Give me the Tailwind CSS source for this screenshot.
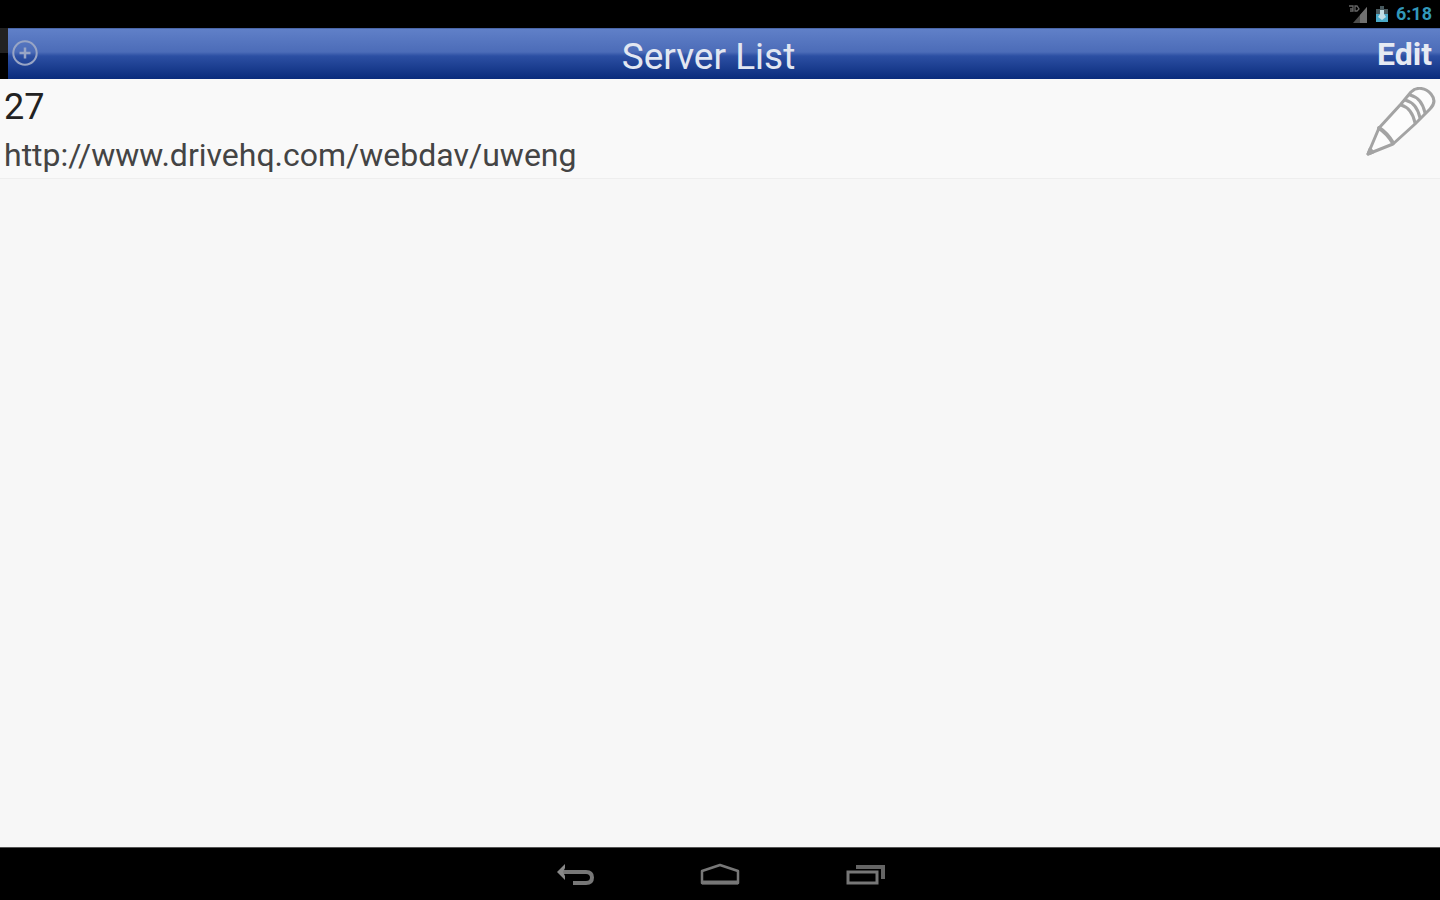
<!DOCTYPE html>
<html lang="en">
<head>
<meta charset="utf-8">
<meta name="viewport" content="width=device-width, initial-scale=1">
<title>Server List</title>
<script src="https://cdn.jsdelivr.net/npm/@tailwindcss/browser@4"></script>
</head>
<body class="flex min-h-screen flex-col bg-[#f7f7f7] font-[Roboto,sans-serif]">
  <div class="flex h-7 items-center justify-end gap-2 bg-black pr-2">
    <svg class="h-5 w-5" viewBox="0 0 20 20" aria-label="Mobile signal" role="img">
      <path d="M19 3v16H5z" fill="#4d4d4d"/>
      <path d="M19 3v16h-7v-8z" fill="#707070"/>
      <path d="M1 2h4v3H2M5 5v2H2M7 2v5h2l2-2-2-3z" fill="none" stroke="#666" stroke-width="1.3"/>
    </svg>
    <svg class="h-5 w-3" viewBox="0 0 12 20" aria-label="Battery" role="img">
      <path d="M4 2h4v3h4v13H0V5h4z" fill="#48595e"/>
      <path d="M0 10h12v8H0z" fill="#49a9c9"/>
      <path d="M4 6h4v4l2 3-4 3-4-3 2-3z" fill="#c2dce3"/>
    </svg>
    <time class="text-lg leading-7 font-bold text-[#3298ba]">6:18</time>
  </div>
  <header class="flex h-[51px] bg-black">
    <div class="w-2 bg-linear-to-b from-[#222] from-50% to-black to-50%"></div>
    <div class="flex flex-1 items-center justify-between border-t border-[#4a66a8] bg-[linear-gradient(to_bottom,#6080c8,#4c6cb8_46%,#2c4fa3_54%,#0a2c7c)] pr-2">
      <button type="button" aria-label="Add server" class="flex w-8 items-center pl-1">
        <svg class="h-7 w-7 shrink-0" viewBox="0 0 28 28" fill="none" stroke="#98a5c5">
          <circle cx="13" cy="13" r="11.700" stroke-width="2"/>
          <path d="M13 7.500v11M7.500 13h11" stroke-width="2.500"/>
        </svg>
      </button>
      <h1 class="pt-1 text-[37px] leading-none text-[#e2e7f1]">Server List</h1>
      <button type="button" class="text-[32px] leading-none font-bold text-[#e6eaf3]">Edit</button>
    </div>
  </header>
  <main class="flex-1">
    <ul>
      <li class="flex h-[100px] justify-between border-b border-[#eee] bg-[#f9f9f9] px-1">
        <a href="#" class="flex flex-col">
          <span class="text-4xl leading-[56px] text-[#222]">27</span>
          <span class="text-[32px] leading-10 text-[#444]">http://www.drivehq.com/webdav/uweng</span>
        </a>
        <button type="button" aria-label="Edit server 27" class="flex items-start pt-2">
          <svg class="h-[70px] w-[70px]" viewBox="0 0 70 70" fill="#fcfcfc" stroke="#a3a3a3" stroke-width="3" stroke-linejoin="round" stroke-linecap="round">
            <path d="M2 67L13 41L35 17L45 5C51-1 60 1 65 7C70 13 68 18 64 22L49 37L27 57z"/>
            <path d="M2 67l2-5 3 3z" fill="#999"/>
            <path d="M13 41q8 5 14 15" fill="none" stroke-width="4"/>
            <path d="M35 18c7 2 12 8 14 18M39 13c8 2 13 8 15 18M44 8c8 2 13 8 15 18" fill="none"/>
          </svg>
        </button>
      </li>
    </ul>
  </main>
  <nav aria-label="System navigation" class="flex h-[53px] items-center justify-center border-t border-[#555] bg-black">
    <button type="button" aria-label="Back" class="flex w-[145px] justify-center">
      <svg class="h-7 w-10" viewBox="0 0 40 28" fill="none" stroke="#777" stroke-width="3">
        <path d="M7 12h24c4 0 6 2 6 5.500s-2 5.500-6 5.500H18" stroke-width="4"/>
        <path d="M10 4v4l-2 4 2 4v4l-8-8z" fill="#888" stroke="none"/>
      </svg>
    </button>
    <button type="button" aria-label="Home" class="flex w-[145px] justify-center">
      <svg class="h-7 w-10" viewBox="0 0 40 28" fill="none" stroke="#777" stroke-width="3" stroke-linejoin="round">
        <path d="M2 23V11L14 7l6-2 6 2 12 4V23z" stroke-width="2.500"/>
        <path d="M2 22.500h36" stroke-width="4"/>
      </svg>
    </button>
    <button type="button" aria-label="Recent apps" class="flex w-[145px] justify-center">
      <svg class="h-7 w-10" viewBox="0 0 40 28" fill="none" stroke="#777" stroke-width="3">
        <path d="M3 12h29v11H3z"/>
        <path d="M11 7h27v12" stroke="#656565" stroke-width="4"/>
      </svg>
    </button>
  </nav>
</body>
</html>
